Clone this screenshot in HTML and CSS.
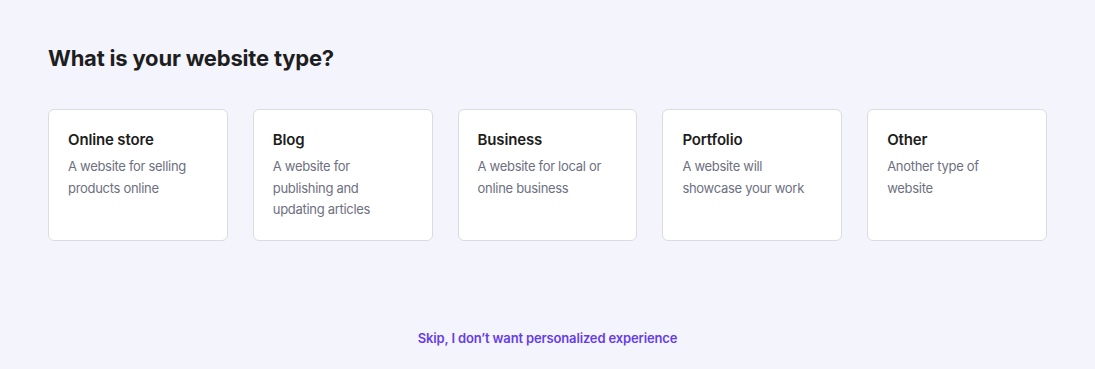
FILE: index.html
```html
<!DOCTYPE html>
<html lang="en">
<head>
<meta charset="utf-8">
<title>Website type</title>
<link rel="stylesheet" href="styles.css">
</head>
<body>
<main class="page">
  <h1 class="title">What is your website type?</h1>
  <div class="cards">
    <div class="card">
      <h2 class="card-title">Online store</h2>
      <p class="card-text">A website for selling products online</p>
    </div>
    <div class="card">
      <h2 class="card-title">Blog</h2>
      <p class="card-text">A website for publishing and updating articles</p>
    </div>
    <div class="card">
      <h2 class="card-title">Business</h2>
      <p class="card-text">A website for local or online business</p>
    </div>
    <div class="card">
      <h2 class="card-title">Portfolio</h2>
      <p class="card-text">A website will showcase your work</p>
    </div>
    <div class="card">
      <h2 class="card-title">Other</h2>
      <p class="card-text">Another type of website</p>
    </div>
  </div>
  <div class="skip-row">
    <a class="skip" href="#">Skip, I don’t want personalized experience</a>
  </div>
</main>
</body>
</html>
```
FILE: styles.css
```css
* { box-sizing: border-box; }
html, body {
  margin: 0;
  padding: 0;
  background: #f4f4fd;
  font-family: "Inter", "Liberation Sans", sans-serif;
  color: #1d1e20;
}
.page {
  width: 1095px;
  height: 369px;
  padding: 44px 48px 0 48px;
}
.title {
  margin: 0;
  font-size: 22px;
  line-height: 28px;
  font-weight: 700;
  letter-spacing: -0.2px;
}
.cards {
  display: grid;
  grid-template-columns: repeat(5, 1fr);
  gap: 25px;
  width: 999px;
  margin-top: 37px;
}
.card {
  background: #ffffff;
  border: 1px solid #dadce0;
  border-radius: 6px;
  height: 132px;
  padding: 20px 19px 0 19px;
}
.card-title {
  margin: 0;
  font-size: 15px;
  line-height: 20px;
  font-weight: 600;
  letter-spacing: -0.15px;
}
.card-text {
  margin: 6px 0 0 0;
  font-size: 13px;
  line-height: 21.5px;
  color: #6d7081;
  letter-spacing: -0.3px;
  padding-right: 8px;
}
.skip-row {
  display: flex;
  justify-content: center;
  margin-top: 88px;
}
.skip {
  color: #673de6;
  font-size: 13px;
  line-height: 18px;
  font-weight: 600;
  letter-spacing: -0.15px;
  text-decoration: none;
}
```
